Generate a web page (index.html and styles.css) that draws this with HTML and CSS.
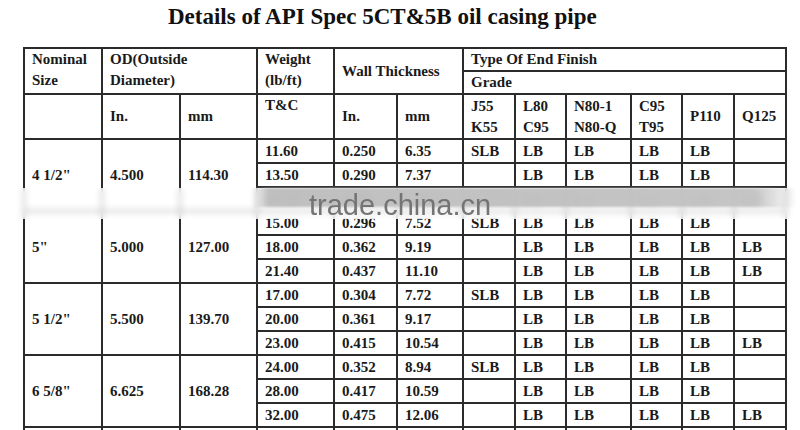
FILE: index.html
```html
<!DOCTYPE html>
<html>
<head>
<meta charset="utf-8">
<title>API Spec 5CT&amp;5B oil casing pipe</title>
<link rel="stylesheet" href="styles.css">
</head>
<body>
<h1 class="title">Details of API Spec 5CT&amp;5B oil casing pipe</h1>
<table class="spec">
  <colgroup>
    <col class="c78"><col class="c78"><col class="c77"><col class="c77"><col class="c63"><col class="c66">
    <col class="c52"><col class="c51"><col class="c65"><col class="c51"><col class="c52"><col class="c52">
  </colgroup>
  <thead>
    <tr class="h1">
      <th rowspan="2" class="top">Nominal<br>Size</th>
      <th rowspan="2" colspan="2" class="top">OD(Outside<br>Diameter)</th>
      <th rowspan="2" class="top">Weight<br>(lb/ft)</th>
      <th rowspan="2" colspan="2">Wall Thickness</th>
      <th colspan="6">Type Of End Finish</th>
    </tr>
    <tr class="h2">
      <th colspan="6">Grade</th>
    </tr>
    <tr class="h3">
      <th></th>
      <th>In.</th>
      <th>mm</th>
      <th class="top">T&amp;C</th>
      <th>In.</th>
      <th>mm</th>
      <th class="two">J55<br>K55</th>
      <th class="two">L80<br>C95</th>
      <th class="two">N80-1<br>N80-Q</th>
      <th class="two">C95<br>T95</th>
      <th>P110</th>
      <th>Q125</th>
    </tr>
  </thead>
  <tbody>
    <tr><td rowspan="3">4 1/2"</td><td rowspan="3">4.500</td><td rowspan="3">114.30</td><td>11.60</td><td>0.250</td><td>6.35</td><td>SLB</td><td>LB</td><td>LB</td><td>LB</td><td>LB</td><td></td></tr>
    <tr><td>13.50</td><td>0.290</td><td>7.37</td><td></td><td>LB</td><td>LB</td><td>LB</td><td>LB</td><td></td></tr>
    <tr><td>15.10</td><td>0.337</td><td>8.56</td><td></td><td>LB</td><td>LB</td><td>LB</td><td>LB</td><td>LB</td></tr>
    <tr><td rowspan="3">5"</td><td rowspan="3">5.000</td><td rowspan="3">127.00</td><td>15.00</td><td>0.296</td><td>7.52</td><td>SLB</td><td>LB</td><td>LB</td><td>LB</td><td>LB</td><td></td></tr>
    <tr><td>18.00</td><td>0.362</td><td>9.19</td><td></td><td>LB</td><td>LB</td><td>LB</td><td>LB</td><td>LB</td></tr>
    <tr><td>21.40</td><td>0.437</td><td>11.10</td><td></td><td>LB</td><td>LB</td><td>LB</td><td>LB</td><td>LB</td></tr>
    <tr><td rowspan="3">5 1/2"</td><td rowspan="3">5.500</td><td rowspan="3">139.70</td><td>17.00</td><td>0.304</td><td>7.72</td><td>SLB</td><td>LB</td><td>LB</td><td>LB</td><td>LB</td><td></td></tr>
    <tr><td>20.00</td><td>0.361</td><td>9.17</td><td></td><td>LB</td><td>LB</td><td>LB</td><td>LB</td><td></td></tr>
    <tr><td>23.00</td><td>0.415</td><td>10.54</td><td></td><td>LB</td><td>LB</td><td>LB</td><td>LB</td><td>LB</td></tr>
    <tr><td rowspan="3">6 5/8"</td><td rowspan="3">6.625</td><td rowspan="3">168.28</td><td>24.00</td><td>0.352</td><td>8.94</td><td>SLB</td><td>LB</td><td>LB</td><td>LB</td><td>LB</td><td></td></tr>
    <tr><td>28.00</td><td>0.417</td><td>10.59</td><td></td><td>LB</td><td>LB</td><td>LB</td><td>LB</td><td></td></tr>
    <tr><td>32.00</td><td>0.475</td><td>12.06</td><td></td><td>LB</td><td>LB</td><td>LB</td><td>LB</td><td>LB</td></tr>
    <tr class="cut"><td></td><td></td><td></td><td></td><td></td><td></td><td></td><td></td><td></td><td></td><td></td><td></td></tr>
  </tbody>
</table>
<div class="watermark">
  <div class="band"></div>
  <span class="mark">trade.china.cn</span>
</div>
</body>
</html>
```
FILE: styles.css
```css
html, body {
  margin: 0;
  padding: 0;
  background: #ffffff;
  overflow: hidden;
  width: 800px;
  height: 430px;
}
body {
  position: relative;
  font-family: "Liberation Serif", "Times New Roman", serif;
  color: #1a1a1a;
}
.title {
  margin: 2px 0 0 0;
  padding-left: 168px;
  height: 45px;
  font-size: 23px;
  line-height: 30px;
  font-weight: bold;
  color: #111;
}
.spec {
  margin-left: 23px;
  border-collapse: collapse;
  table-layout: fixed;
  width: 764px;
  font-size: 15px;
  font-weight: bold;
}
.c78 { width: 78px; }
.c77 { width: 77px; }
.c66 { width: 66px; }
.c65 { width: 65px; }
.c63 { width: 63px; }
.c52 { width: 52px; }
.c51 { width: 51px; }
.spec th,
.spec td {
  border: 2px solid #2b2b2b;
  padding: 0 0 0 7px;
  text-align: left;
  vertical-align: middle;
  font-weight: bold;
  line-height: 21px;
  white-space: nowrap;
  overflow: hidden;
}
.spec th.top {
  vertical-align: top;
}
.h1, .h2 { height: 23px; }
.h3 { height: 45px; }
.spec tbody tr { height: 24px; }
.watermark {
  position: absolute;
  left: 0;
  top: 188px;
  width: 800px;
  height: 31px;
  background: rgba(255, 255, 255, 0.7);
  -webkit-backdrop-filter: blur(3px);
  backdrop-filter: blur(3px);
}
.band {
  position: absolute;
  left: 252px;
  top: 0;
  width: 545px;
  height: 19px;
  background: linear-gradient(to right, rgba(200,200,200,0) 0%, rgba(188,188,188,0.95) 3%, rgba(192,192,192,0.92) 92%, rgba(210,210,210,0) 100%);
  filter: blur(1px);
}
.mark {
  position: absolute;
  left: 309px;
  top: 0;
  font-family: "Liberation Sans", Arial, sans-serif;
  font-size: 29px;
  line-height: 34px;
  color: #747474;
  filter: blur(0.4px);
}
```
